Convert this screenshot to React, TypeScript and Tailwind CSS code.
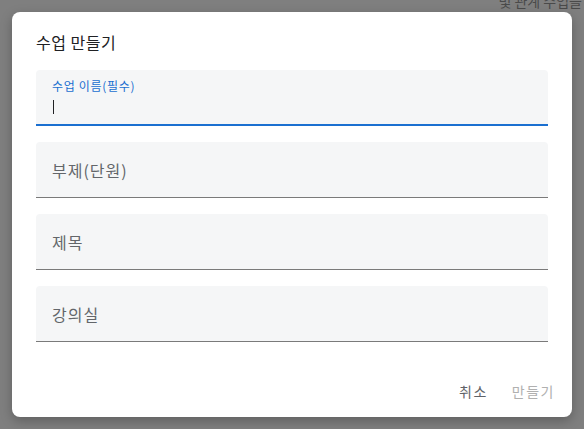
import React from "react";

const font = { fontFamily: '"Noto Sans CJK KR", "Noto Sans", sans-serif' };

function Field({ label }: { label: string }) {
  return (
    <div className="h-[56px] rounded-t-[4px] bg-[#f5f6f7] border-b border-[#7a7a7a] flex items-center px-[16px]">
      <span className="text-[16px] leading-[20px] tracking-[1px] text-[#63666a]">{label}</span>
    </div>
  );
}

export default function App() {
  return (
    <div className="relative w-[584px] h-[429px] bg-[#7f7f7f] overflow-hidden" style={font}>
      <div className="absolute right-[2px] top-[-9px] text-[14px] text-[#4a4a4a] whitespace-nowrap">및 관계 수업을</div>
      <div className="absolute left-[12px] top-[12px] w-[560px] h-[405px] bg-white rounded-[8px] shadow-[0_4px_12px_rgba(0,0,0,0.25)] flex flex-col">
        <div className="pt-[20px] px-[24px] h-[58px]">
          <h2 className="text-[16px] leading-[20px] tracking-[0.5px] text-[#202124]">수업 만들기</h2>
        </div>
        <div className="px-[24px] flex flex-col gap-[16px]">
          <div className="h-[56px] rounded-t-[4px] bg-[#f5f6f7] border-b-2 border-[#1a6fd0] flex flex-col px-[16px] pt-[8px]">
            <span className="text-[12px] leading-[16px] tracking-[0.7px] text-[#1a6fd0]">수업 이름(필수)</span>
            <span className="mt-[6px] ml-[1px] w-[1px] h-[14px] bg-[#202124]"></span>
          </div>
          <Field label="부제(단원)" />
          <Field label="제목" />
          <Field label="강의실" />
        </div>
        <div className="mt-auto mb-[16px] pr-[17px] flex justify-end items-center gap-[24px] text-[14px] leading-[20px] tracking-[1.5px]">
          <button className="text-[#5f6368]">취소</button>
          <button className="text-[#b0b0b0]">만들기</button>
        </div>
      </div>
    </div>
  );
}
